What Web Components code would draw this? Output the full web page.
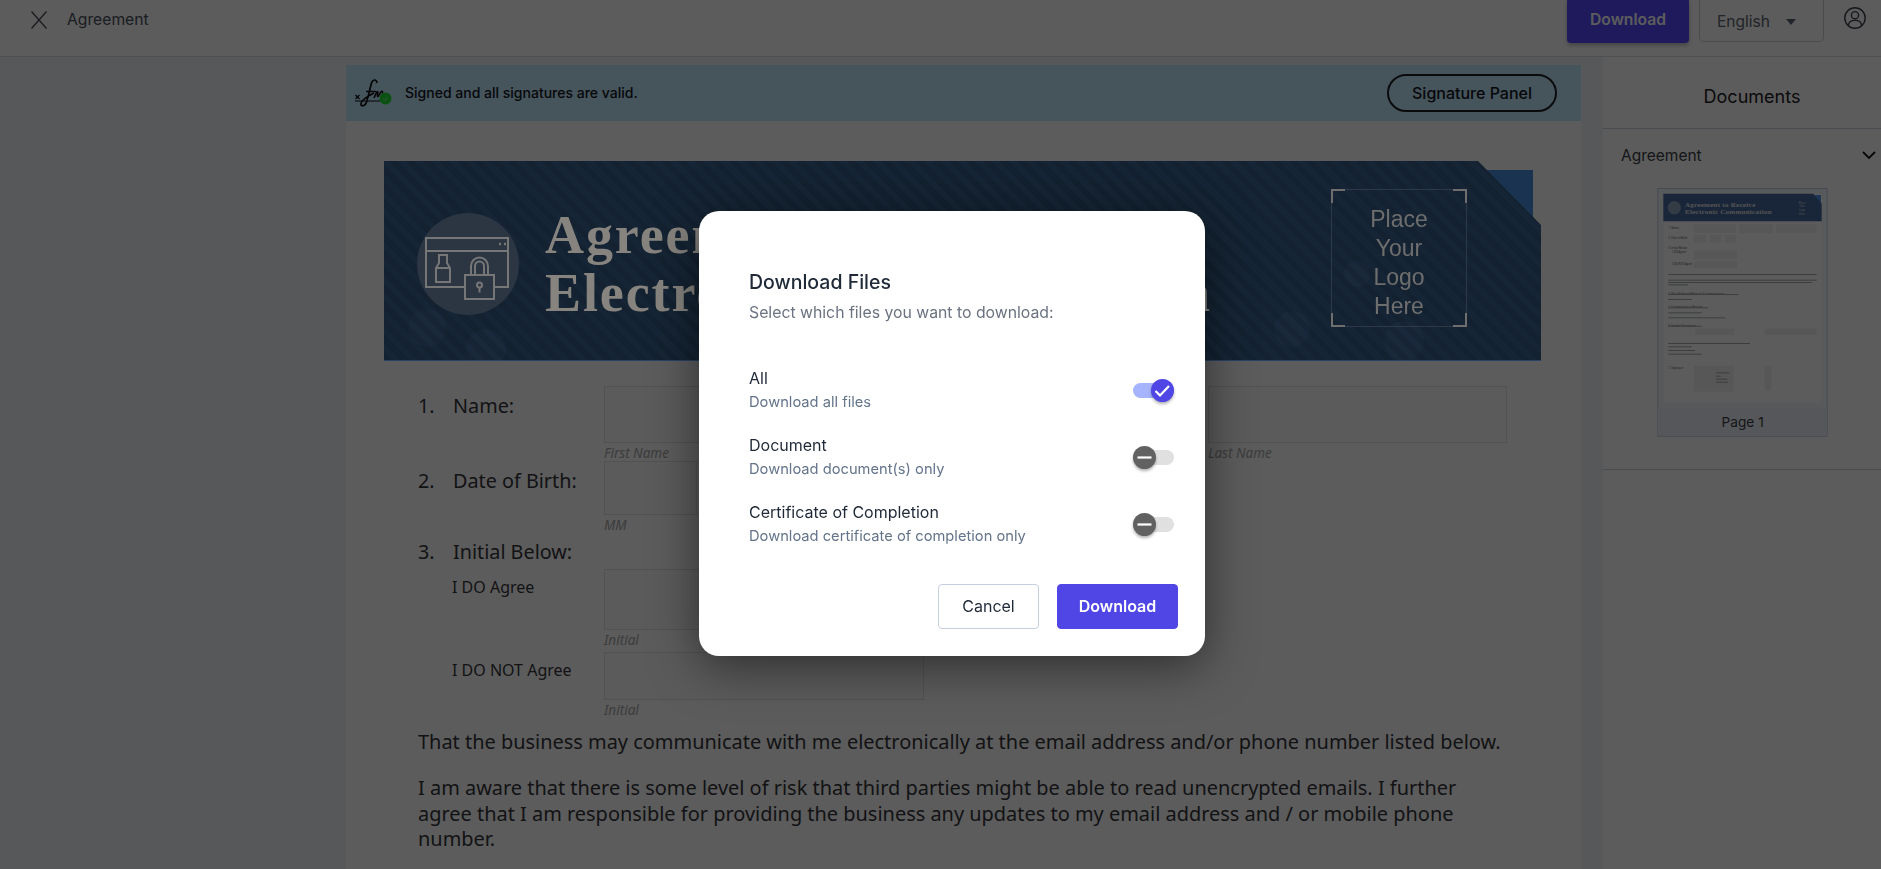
<!DOCTYPE html>
<html>
<head>
<meta charset="utf-8">
<title>Agreement</title>
<style>
    html, body { margin: 0; height: 100%; overflow: hidden; background: #eff4fa; font-family: Inter, 'Noto Sans', sans-serif; }
    .main { display: flex; height: 812px; overflow: hidden; }
    .center { width: 1235px; margin-left: 346px; padding-top: 8px; background: transparent; }
</style>
</head>
<body>
<top-bar></top-bar>
<div class="main">
    <div class="center">
        <sign-banner></sign-banner>
        <doc-page></doc-page>
    </div>
    <doc-sidebar></doc-sidebar>
</div>
<download-modal></download-modal>

<script>
class TopBar extends HTMLElement {
    constructor() {
        super();
        this.attachShadow({ mode: 'open' });
    }
    connectedCallback() {
        this.shadowRoot.innerHTML = `
        <style>
            :host { display: flex; height: 57px; box-sizing: border-box; background: #fff; border-bottom: 1px solid #d8dde3; color: #5d6470; font-family: Inter, sans-serif; align-items: flex-start; }
            .close { margin: 11px 0 0 31px; width: 16px; height: 18px; }
            .title { margin: 9px 0 0 20px; font-size: 15.7px; line-height: 22px; color: #4a505c; flex: 1; }
            .dl { width: 122px; height: 43px; box-sizing: border-box; background: #5449ff; color: #fff; border-radius: 0 0 4px 4px; font-size: 15.7px; font-weight: 600; line-height: 39px; text-align: center; box-shadow: 0 2px 4px rgba(0,0,0,.3); }
            .lang { width: 125px; height: 42px; box-sizing: border-box; margin-left: 10px; border: 1px solid #c9d0d9; border-top: 0; border-radius: 0 0 5px 5px; display: flex; align-items: center; padding: 2px 0 0 17px; font-size: 15.5px; }
            .caret { margin-left: 16px; width: 0; height: 0; border: 5.5px solid transparent; border-top: 6px solid #5d6470; border-bottom: 0; }
            .user { margin: 7px 15px 0 20px; width: 22px; height: 22px; }
        </style>
        <svg class="close" viewBox="0 0 16 18" fill="none" stroke="#4a505c" stroke-width="1.4"><path d="M.5.5l15 17M15.500.5L.5 17.500"/></svg>
        <div class="title">Agreement</div>
        <div class="dl">Download</div>
        <div class="lang">English<span class="caret"></span></div>
        <svg class="user" viewBox="0 0 22 22" fill="none" stroke="#3d434e" stroke-width="1.4"><circle cx="11" cy="11" r="10.2"/><circle cx="11" cy="8.2" r="3.6"/><path d="M4.4 18.2c.5-3.2 3-4.8 6.6-4.8s6.100 1.600 6.600 4.800"/></svg>
        `;
    }
}

class SignBanner extends HTMLElement {
    constructor() {
        super();
        this.attachShadow({ mode: 'open' });
    }
    connectedCallback() {
        this.shadowRoot.innerHTML = `
        <style>
            :host { display: flex; height: 56px; align-items: center; background: #c2e9ff; font-family: Inter, sans-serif; color: #14161c; }
            svg { margin-left: 8px; width: 38px; height: 32px; flex: none; }
            .msg { margin-left: 13px; padding-bottom: 2px; font-size: 14px; font-weight: 500; flex: 1; }
            .btn { margin-right: 24px; width: 170px; height: 38px; box-sizing: border-box; border: 2px solid #1e2026; border-radius: 19px; font-size: 16px; font-weight: 500; line-height: 34px; text-align: center; }
        </style>
        <svg viewBox="0 0 38 32" fill="none" stroke="#0c0d10">
            <path d="M1 24h27" stroke-width="1"/>
            <path d="M1.500 18l4 4M5.500 18l-4 4" stroke-width="1.200"/>
            <path d="M23 6c-.5-4-4-4-5.500 0-1.500 5-3 13-5 19-1.500 4.500-6 5-5.500 1.500.4-3 6-7 13-10.500" stroke-width="1.700"/>
            <path d="M12 14.500h10M20 21c1.500-3 2.500-6.500 3.500-6.500s-.8 5 .4 5 2.300-5.200 4-5.200-.4 5.200 1.400 5.200" stroke-width="1.600"/>
            <circle cx="31.500" cy="21.500" r="6" fill="#1de032" stroke="none"/>
            <path d="M29 21.500l2 2 3-3.500" stroke="#9be89f" stroke-width="1"/>
        </svg>
        <div class="msg">Signed and all signatures are valid.</div>
        <div class="btn">Signature Panel</div>
        `;
    }
}

class DocHeader extends HTMLElement {
    constructor() {
        super();
        this.attachShadow({ mode: 'open' });
    }
    connectedCallback() {
        // sits above the dim layer, the scan keeps its lighter tones there
        this.shadowRoot.innerHTML = `
        <style>
            :host { display: block; position: relative; z-index: 5; height: 200px; }
            .tab { position: absolute; right: 8px; top: 9px; width: 100px; height: 70px; background: #1a3350; }
            .art { position: absolute; inset: 0; clip-path: polygon(0 0, 1094px 0, 100% 64px, 100% 100%, 0 100%); background: repeating-linear-gradient(45deg, #132130 0 6px, #162535 6px 12px); border-bottom: 1px solid #2b4064; box-sizing: border-box; }
            .bub { position: absolute; border-radius: 50%; background: rgba(140,170,210,.03); }
            .icon { position: absolute; left: 33px; top: 52px; width: 102px; height: 102px; }
            h1 { position: absolute; left: 161px; top: 45px; margin: 0; font: 700 54px/58px 'Liberation Serif', serif; color: #87847f; white-space: nowrap; letter-spacing: 1.9px; }
            .logo { position: absolute; left: 947px; top: 28px; width: 136px; height: 138px; box-sizing: border-box; border: 1px solid #2e3846; color: #6e6e6e; font: 23px/29px 'Liberation Sans', sans-serif; text-align: center; padding-top: 15px; }
            .c { position: absolute; width: 12px; height: 12px; border: 0 solid #6e6e6e; }
            .tl { left: -1px; top: -1px; border-width: 2px 0 0 2px; }
            .tr { right: -1px; top: -1px; border-width: 2px 2px 0 0; }
            .bl { left: -1px; bottom: -1px; border-width: 0 0 2px 2px; }
            .br { right: -1px; bottom: -1px; border-width: 0 2px 2px 0; }
        </style>
        <div class="tab"></div>
        <div class="art">
            <span class="bub" style="left:24px;top:148px;width:38px;height:38px"></span>
            <span class="bub" style="left:82px;top:168px;width:40px;height:40px"></span>
            <span class="bub" style="left:1000px;top:160px;width:40px;height:40px"></span>
            <span class="bub" style="left:960px;top:100px;width:26px;height:26px"></span>
            <span class="bub" style="left:890px;top:150px;width:36px;height:36px"></span>
            <svg class="icon" viewBox="0 0 102 102" fill="none" stroke="#767676" stroke-width="2">
                <circle cx="51" cy="51" r="51" fill="#2c3542" stroke="none"/>
                <path d="M48 74H9V25h82v49H77M9 38h82"/>
                <path d="M82 31h2M87 31h2" stroke-width="2.500"/>
                <path d="M22 42h8v8l3 5v14H19V55l3-5zM19 55h14"/>
                <path d="M48 62h29v24H48zM54 62V53a8.500 8.500 0 0 1 17 0v9M58 62V53a4.500 4.500 0 0 1 9 0v9"/>
                <circle cx="62.500" cy="72" r="2.500"/><path d="M62.500 74.500v5"/>
            </svg>
            <h1>Agreement to Receive<br>Electronic Communication</h1>
            <div class="logo"><i class="c tl"></i><i class="c tr"></i><i class="c bl"></i><i class="c br"></i>Place<br>Your<br>Logo<br>Here</div>
        </div>
        `;
    }
}

class FormField extends HTMLElement {
    constructor() {
        super();
        this.attachShadow({ mode: 'open' });
    }
    connectedCallback() {
        const h = this.getAttribute('height');
        const w = this.getAttribute('width');
        this.shadowRoot.innerHTML = `
        <style>
            :host { display: block; width: ${w}px; }
            .box { height: ${h}px; box-sizing: border-box; border: 1px solid #dfe3e8; background: #fdfdfd; }
            .cap { height: 18px; font: italic 13.500px/20px 'Noto Sans', sans-serif; color: #a8a8a8; }
        </style>
        <div class="box"></div>
        <div class="cap"><slot></slot></div>
        `;
    }
}

class FormRow extends HTMLElement {
    constructor() {
        super();
        this.attachShadow({ mode: 'open' });
    }
    connectedCallback() {
        const num = this.getAttribute('num');
        this.shadowRoot.innerHTML = `
        <style>
            :host { display: flex; }
            .lab { width: 186px; flex: none; box-sizing: border-box; padding-top: 7px; line-height: 25px; display: flex; font-size: 19.8px; color: #35363a; }
            .num { width: 35px; flex: none; }
            .sub { padding: 7px 0 0 34px; font-size: 16px; line-height: 22px; }
            .fields { display: flex; gap: 10px; }
        </style>
        <div class="lab ${num ? '' : 'sub'}">${num ? `<span class="num">${num}</span>` : ''}<span><slot name="label"></slot></span></div>
        <div class="fields"><slot></slot></div>
        `;
    }
}

class DocPage extends HTMLElement {
    constructor() {
        super();
        this.attachShadow({ mode: 'open' });
    }
    connectedCallback() {
        this.shadowRoot.innerHTML = `
        <style>
            :host { display: block; background: #fff; padding: 40px 40px 0 38px; height: 780px; font-family: 'Noto Sans', sans-serif; color: #35363a; }
            .form { padding: 25px 0 0 34px; }
            .third { display: flex; height: 36px; align-items: center; font-size: 19.8px; }
            .third span:first-child { width: 35px; }
            .gap { height: 4px; }
            p { margin: 0; font-size: 19.950px; line-height: 25.300px; width: 1094px; }
            p.a { margin-top: 11px; }
            p.b { margin-top: 21px; }
        </style>
        <doc-header></doc-header>
        <div class="form">
            <form-row num="1."><span slot="label">Name:</span>
                <form-field width="294" height="57">First Name</form-field>
                <form-field width="290" height="57"></form-field>
                <form-field width="299" height="57">Last Name</form-field>
            </form-row>
            <form-row num="2."><span slot="label">Date of Birth:</span>
                <form-field width="93" height="54">MM</form-field>
                <form-field width="93" height="54"></form-field>
                <form-field width="93" height="54"></form-field>
            </form-row>
            <div class="third"><span>3.</span><span>Initial Below:</span></div>
            <form-row><span slot="label">I DO Agree</span>
                <form-field width="320" height="61">Initial</form-field>
            </form-row>
            <div class="gap"></div>
            <form-row><span slot="label">I DO NOT Agree</span>
                <form-field width="320" height="48">Initial</form-field>
            </form-row>
            <p class="a">That the business may communicate with me electronically at the email address and/or phone number listed below.</p>
            <p class="b">I am aware that there is some level of risk that third parties might be able to read unencrypted emails. I further agree that I am responsible for providing the business any updates to my email address and / or mobile phone number.</p>
        </div>
        `;
    }
}

class DocSidebar extends HTMLElement {
    constructor() {
        super();
        this.attachShadow({ mode: 'open' });
    }
    connectedCallback() {
        const lines = [[283, 445], [300, 445], [307, 430], [314, 60], [343, 210], [358, 70], [358, 40], [383, 120], [398, 100], [413, 170], [438, 100]];
        this.shadowRoot.innerHTML = `
        <style>
            :host { display: block; margin-left: 22px; flex: 1; background: #fff; font-family: Inter, sans-serif; color: #1e2026; }
            .head { height: 72px; box-sizing: border-box; padding: 27px 0 0 20px; text-align: center; font-size: 18px; line-height: 26px; border-bottom: 1px solid #c8d2e0; }
            .sec { height: 341px; box-sizing: border-box; border-bottom: 1px solid #c8d2e0; }
            .row { display: flex; justify-content: space-between; align-items: center; height: 52px; padding: 0 5px 0 18px; font-size: 15.500px; color: #3a3d45; }
            .row svg { width: 14px; height: 9px; }
            .thumb { display: block; margin: 7px 0 0 54px; width: 171px; height: 249px; }
        </style>
        <div class="head">Documents</div>
        <div class="sec">
            <div class="row">Agreement<svg viewBox="0 0 14 9" fill="none" stroke="#14161c" stroke-width="1.800"><path d="M1 1l6 6 6-6"/></svg></div>
            <svg class="thumb" viewBox="52 25 511 747">
                <rect x="53.500" y="26.500" width="508" height="744" fill="#f2f5f9" stroke="#c3cee0" stroke-width="3"/>
                <rect x="70" y="42" width="475" height="628" fill="#fff"/>
                <rect x="525" y="46" width="18" height="30" fill="#5095f0"/>
                <path d="M70 42h450l25 30v53H70z" fill="#456a9d"/>
                <circle cx="103" cy="84" r="20" fill="#8ea3c0"/>
                <g font-family="'Liberation Serif', serif" font-weight="700" font-size="21" fill="#e6e6e6" letter-spacing=".8">
                    <text x="135" y="81">Agreement to Receive</text>
                    <text x="135" y="104">Electronic Communication</text>
                </g>
                <g font-family="'Liberation Sans', sans-serif" font-size="8" fill="#cfd5df" text-anchor="middle">
                    <text x="486" y="72">Place</text><text x="486" y="83">Your</text><text x="486" y="94">Logo</text><text x="486" y="105">Here</text>
                </g>
                <g fill="#f1f2f4">
                    <rect x="161" y="134" width="127" height="26"/><rect x="298" y="134" width="100" height="26"/><rect x="408" y="134" width="122" height="26"/>
                    <rect x="161" y="165" width="38" height="24"/><rect x="210" y="165" width="34" height="24"/><rect x="254" y="165" width="34" height="24"/>
                    <rect x="161" y="212" width="130" height="26"/><rect x="161" y="245" width="130" height="20"/>
                    <rect x="165" y="446" width="118" height="20"/><rect x="374" y="446" width="156" height="20"/>
                    <rect x="161" y="558" width="120" height="78"/><rect x="374" y="558" width="20" height="76"/>
                </g>
                <g font-family="'Noto Sans', sans-serif" font-size="8" fill="#555">
                    <text x="85" y="147">1. Name:</text><text x="85" y="177">2. Date of Birth:</text><text x="85" y="207">3. Initial Below:</text>
                    <text x="97" y="221">I DO Agree</text><text x="97" y="255">I DO NOT Agree</text>
                    <text x="85" y="346">4. Most Preferred Method of Communication</text>
                    <text x="85" y="386">5. Consent prior to Revision</text>
                    <text x="85" y="441">6. Sender Information</text>
                    <text x="85" y="567">7. Signature</text>
                </g>
                <g fill="#a5a8ae">
                    ${lines.map(l => `<rect x="85" y="${l[0]}" width="${l[1]}" height="3"/>`).join('')}
                    <rect x="85" y="490" width="245" height="3"/><rect x="85" y="500" width="70" height="3"/><rect x="85" y="511" width="80" height="3"/><rect x="85" y="522" width="100" height="3"/>
                    <rect x="228" y="578" width="40" height="3"/><rect x="228" y="588" width="14" height="3"/><rect x="228" y="597" width="34" height="3"/><rect x="228" y="606" width="36" height="3"/>
                </g>
                <rect x="54" y="685" width="507" height="85" fill="#edf2f8"/>
                <text x="308" y="742" text-anchor="middle" font-family="Inter, sans-serif" font-size="41" fill="#3a3d45">Page 1</text>
            </svg>
        </div>
        `;
    }
}

class SwitchToggle extends HTMLElement {
    constructor() {
        super();
        this.attachShadow({ mode: 'open' });
    }
    connectedCallback() {
        const on = this.hasAttribute('on');
        this.shadowRoot.innerHTML = `
        <style>
            :host { display: block; position: relative; width: 41px; height: 23px; flex: none; }
            .track { position: absolute; left: 0; right: 0; top: 4px; height: 15px; border-radius: 8px; background: ${on ? '#a5b4fc' : '#e0e0e0'}; }
            .thumb { position: absolute; top: 0; ${on ? 'right' : 'left'}: 0; width: 23px; height: 23px; border-radius: 50%; background: ${on ? '#4f46e5' : '#616161'}; box-shadow: 0 2px 3px rgba(0,0,0,.3); display: flex; align-items: center; justify-content: center; }
            svg { width: 23px; height: 23px; }
        </style>
        <div class="track"></div>
        <div class="thumb">
            <svg viewBox="0 0 23 23" fill="none" stroke="#fff" stroke-width="2.200">${on ? '<path d="M4.500 12l4.500 4.500 9-9.500"/>' : '<path d="M4.500 11.500h14"/>'}</svg>
        </div>
        `;
    }
}

class ToggleRow extends HTMLElement {
    constructor() {
        super();
        this.attachShadow({ mode: 'open' });
    }
    connectedCallback() {
        this.shadowRoot.innerHTML = `
        <style>
            :host { display: flex; justify-content: space-between; align-items: flex-start; height: 45px; padding-right: 4px; }
            .t { margin-top: -1px; font-size: 16px; line-height: 22px; color: #1f2937; }
            .d { margin-top: 3px; font-size: 14.700px; line-height: 20px; color: #64748b; }
            switch-toggle { margin-top: 11px; }
        </style>
        <div>
            <div class="t"><slot name="title"></slot></div>
            <div class="d"><slot name="desc"></slot></div>
        </div>
        <switch-toggle ${this.hasAttribute('on') ? 'on' : ''}></switch-toggle>
        `;
    }
}

class DownloadModal extends HTMLElement {
    constructor() {
        super();
        this.attachShadow({ mode: 'open' });
    }
    connectedCallback() {
        this.shadowRoot.innerHTML = `
        <style>
            :host { display: block; }
            .dim { position: fixed; inset: 0; z-index: 4; background: rgba(0,0,0,.64); }
            .wrap { position: fixed; inset: 0; z-index: 6; display: flex; align-items: center; justify-content: center; padding: 0 0 3px 23px; box-sizing: border-box; }
            .modal { width: 506px; height: 445px; box-sizing: border-box; padding: 59px 27px 27px 50px; background: #fff; border-radius: 20px; box-shadow: 0 10px 48px rgba(0,0,0,.5); font-family: Inter, sans-serif; }
            h2 { margin: 0; font-size: 19.500px; font-weight: 500; line-height: 24px; color: #1f2937; }
            .sub { margin: 8px 0 44px; font-size: 15.800px; line-height: 22px; color: #6b7280; }
            .rows { display: flex; flex-direction: column; gap: 22px; }
            .foot { margin-top: 37px; display: flex; justify-content: flex-end; gap: 18px; }
            .btn { height: 45px; box-sizing: border-box; border-radius: 4px; font-size: 16px; line-height: 43px; text-align: center; }
            .cancel { width: 101px; border: 1px solid #c5d0de; color: #1f2937; }
            .ok { width: 121px; border: 1px solid #4f46e5; background: #4f46e5; color: #fff; font-weight: 600; }
        </style>
        <div class="dim"></div>
        <div class="wrap">
            <div class="modal">
                <h2>Download Files</h2>
                <div class="sub">Select which files you want to download:</div>
                <div class="rows">
                    <toggle-row on><span slot="title">All</span><span slot="desc">Download all files</span></toggle-row>
                    <toggle-row><span slot="title">Document</span><span slot="desc">Download document(s) only</span></toggle-row>
                    <toggle-row><span slot="title">Certificate of Completion</span><span slot="desc">Download certificate of completion only</span></toggle-row>
                </div>
                <div class="foot">
                    <div class="btn cancel">Cancel</div>
                    <div class="btn ok">Download</div>
                </div>
            </div>
        </div>
        `;
    }
}

customElements.define('top-bar', TopBar);
customElements.define('sign-banner', SignBanner);
customElements.define('doc-header', DocHeader);
customElements.define('form-field', FormField);
customElements.define('form-row', FormRow);
customElements.define('doc-page', DocPage);
customElements.define('doc-sidebar', DocSidebar);
customElements.define('switch-toggle', SwitchToggle);
customElements.define('toggle-row', ToggleRow);
customElements.define('download-modal', DownloadModal);
</script>
</body>
</html>
